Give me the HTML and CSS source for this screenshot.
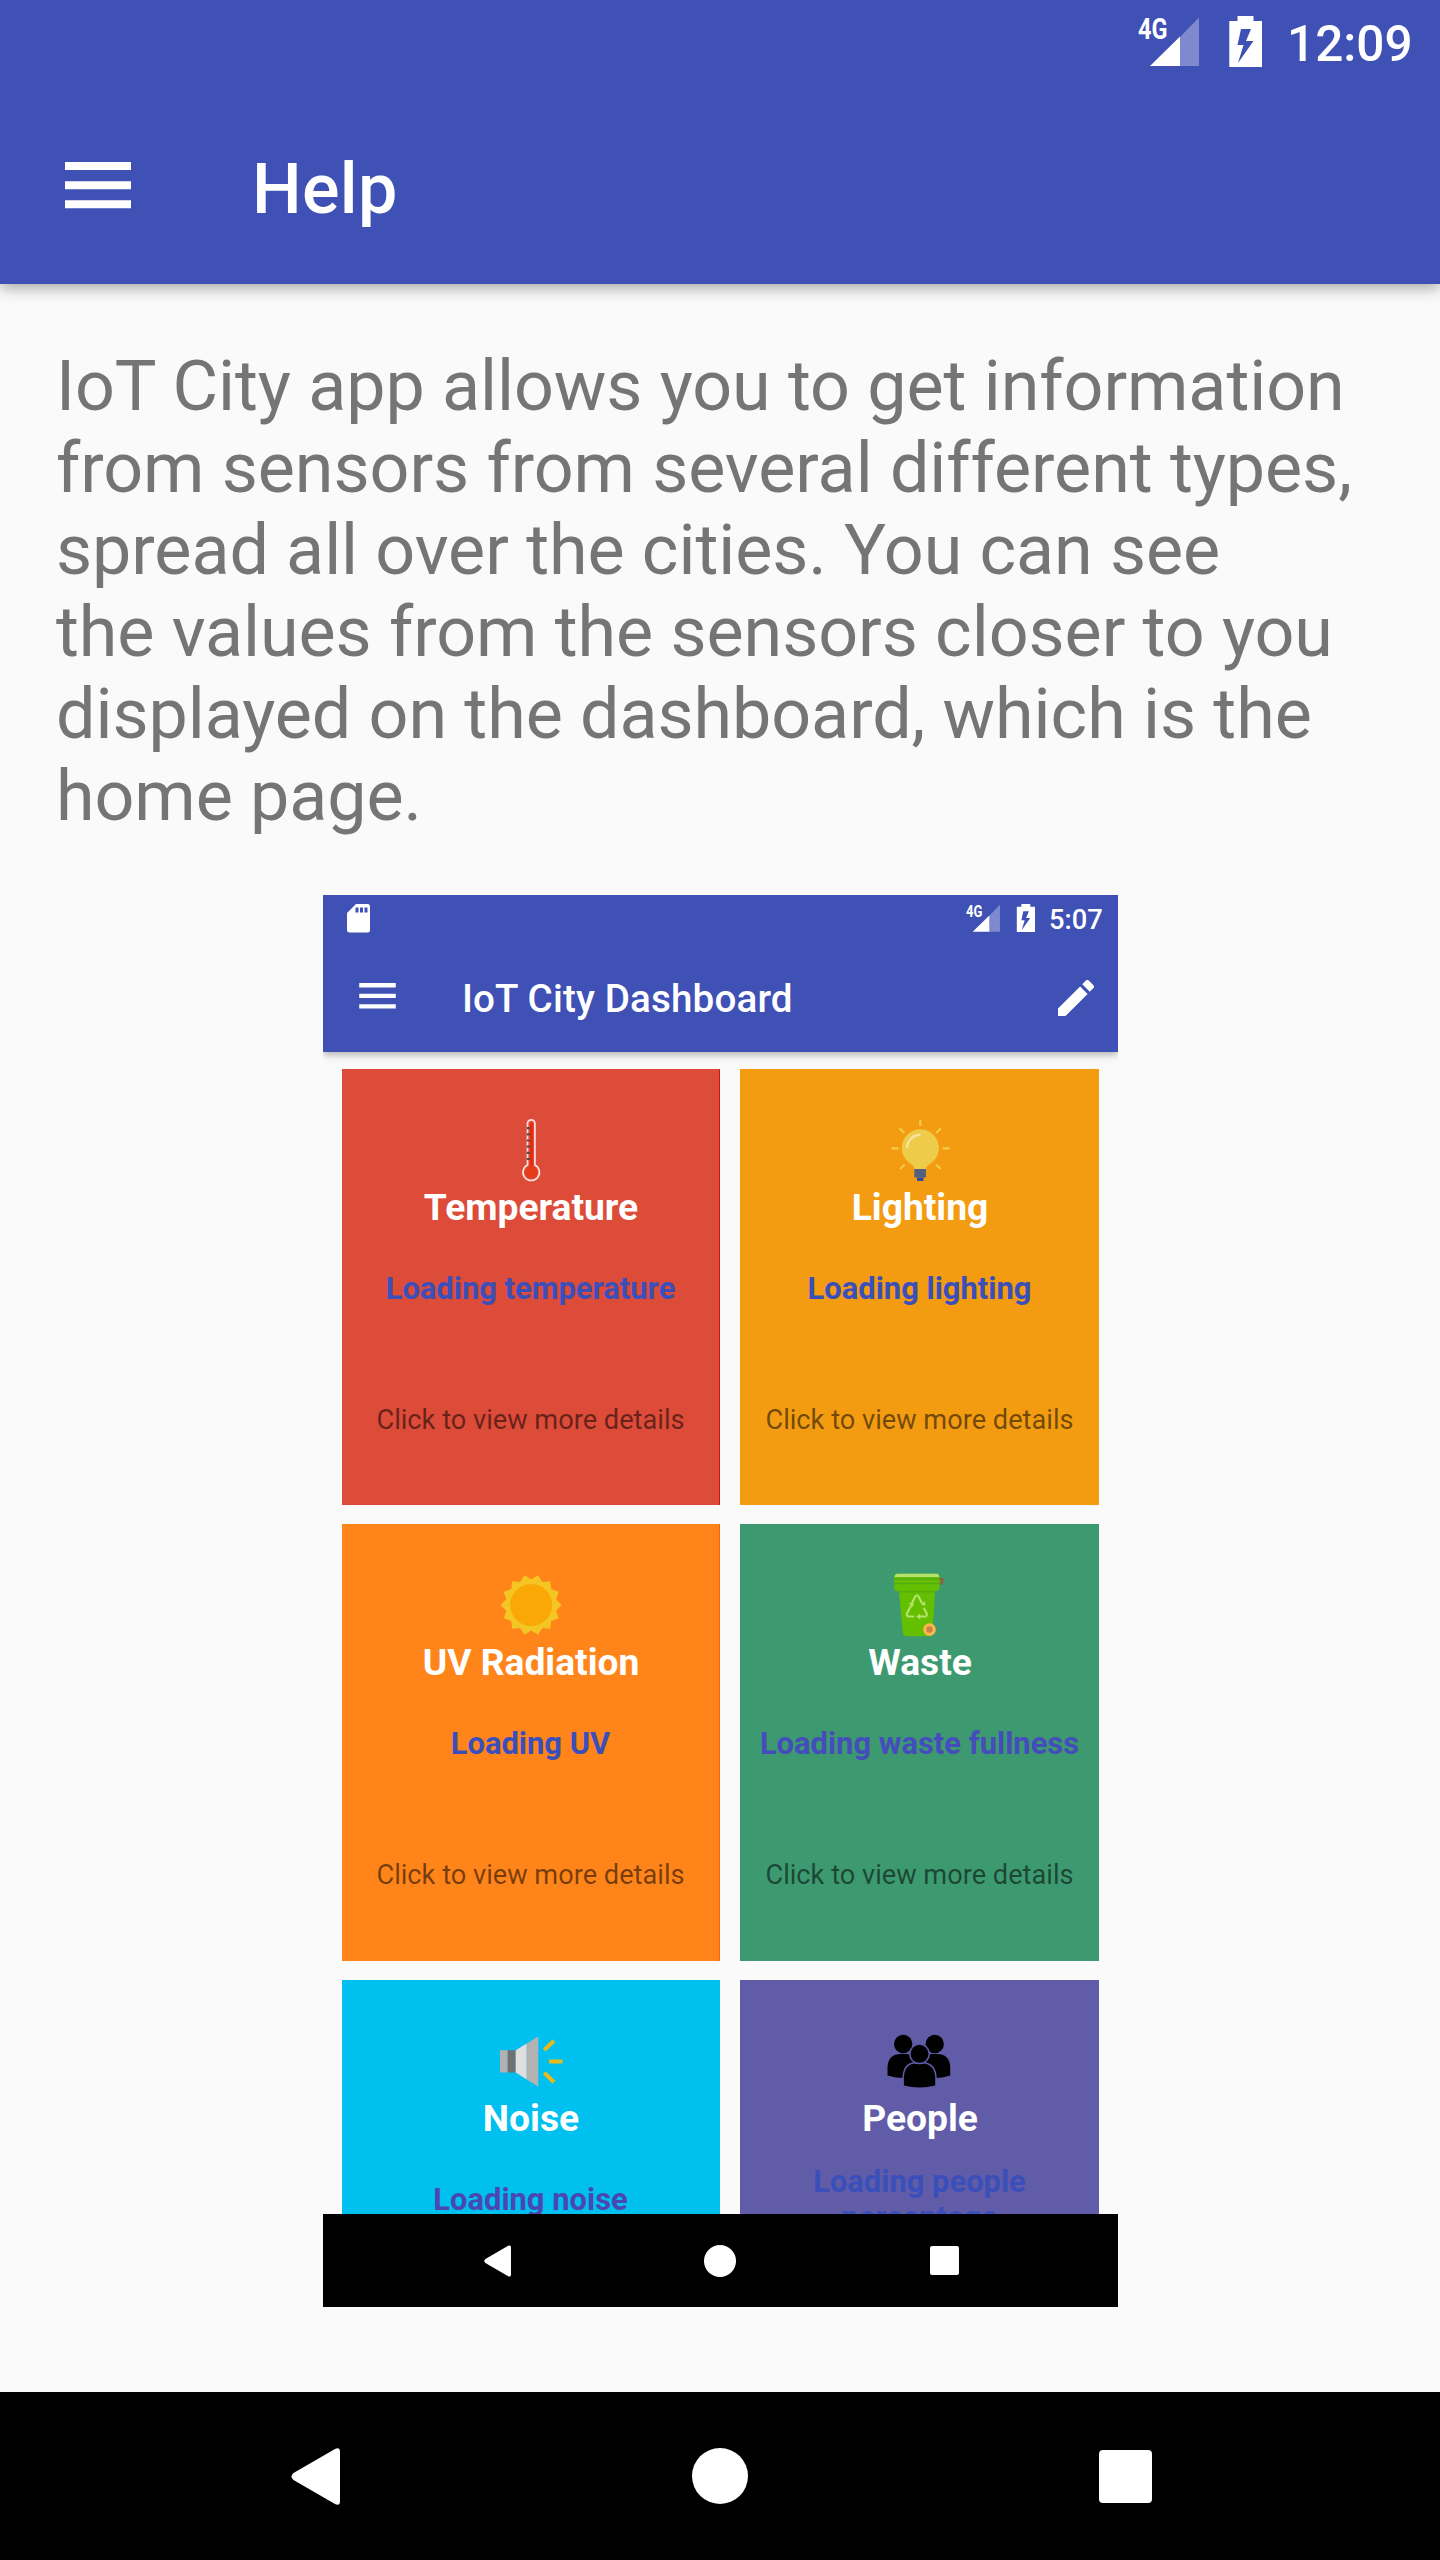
FILE: index.html
```html
<!DOCTYPE html>
<html lang="en">
<head>
<meta charset="utf-8">
<title>Help</title>
<link rel="stylesheet" href="styles.css">
</head>
<body>
<svg class="defs" aria-hidden="true">
  <symbol id="radio" viewBox="0 0 124 51">
    <text x="0" y="23" class="radio-label" textLength="29.5" lengthAdjust="spacingAndGlyphs">4G</text>
    <path d="M42 21 61 1.500V50H42z" fill="#fff" fill-opacity=".33"/>
    <path d="M12 50 42 20.500V50z" fill="#fff"/>
    <path fill="#fff" fill-rule="evenodd" d="M99.500 0h16v5H124v46H91.300V5h8.200zM103 13l-3.500 16h6l-5.500 18 15.500-22h-7.500l5-12z"/>
  </symbol>
  <symbol id="menu" viewBox="0 0 66 47">
    <path fill="#fff" d="M0 0h66v8H0zM0 19.300h66v8H0zM0 38.300h66v8H0z"/>
  </symbol>
  <symbol id="back" viewBox="0 0 49 57">
    <path fill="#fff" d="M44 1Q49-1.500 49 4V53Q49 58.500 44 56L2.500 32Q-1.500 28.500 2.500 25z"/>
  </symbol>
</svg>

<header class="app-header">
  <div class="status-bar">
    <svg class="radio"><use href="#radio"/></svg>
    <span class="clock">12:09</span>
  </div>
  <div class="toolbar">
    <svg class="menu"><use href="#menu"/></svg>
    <h1 class="title">Help</h1>
  </div>
</header>

<main class="content">
  <p class="intro">IoT City app allows you to get information<br>from sensors from several different types,<br>spread all over the cities. You can see<br>the values from the sensors closer to you<br>displayed on the dashboard, which is the<br>home page.</p>

  <section class="preview">
    <header class="preview-header">
      <div class="preview-status">
        <svg class="sd-card" viewBox="0 0 23 29"><path fill="#fff" fill-rule="evenodd" d="M9 0H20.500Q23 0 23 2.500V26Q23 28.500 20.500 28.500H2.500Q0 28.500 0 26V9zM8.500 3.500v5h3v-5zM13 3.500v5h3v-5zM17.500 3.500v5h3v-5z"/></svg>
        <svg class="preview-radio"><use href="#radio"/></svg>
        <span class="preview-clock">5:07</span>
      </div>
      <div class="preview-toolbar">
        <svg class="preview-menu"><use href="#menu"/></svg>
        <h2 class="preview-title">IoT City Dashboard</h2>
        <svg class="edit" viewBox="3 3 18 18"><path fill="#fff" d="M3 17.250V21h3.750L17.810 9.940l-3.750-3.750L3 17.250zM20.710 7.040a1 1 0 0 0 0-1.410l-2.340-2.340a1 1 0 0 0-1.410 0l-1.830 1.830 3.750 3.750 1.830-1.830z"/></svg>
      </div>
    </header>

    <div class="cards">
      <article class="card temperature">
        <svg class="icon" viewBox="0 0 64 64">
          <path d="M28.500 48V6.500a3.700 3.700 0 0 1 7.400 0V48a8.200 8.200 0 1 1-7.400 0z" fill="#dd4b39" stroke="#fbe3df" stroke-width="1.700"/>
          <path d="M32.500 6v44" stroke="#ea2a10" stroke-width="3"/>
          <circle cx="32.200" cy="55.300" r="6" fill="#e63c18"/>
          <path d="M29.500 10v33" stroke="#5a4a44" stroke-width="3.600" stroke-dasharray="2.200 4"/>
        </svg>
        <h3 class="name">Temperature</h3>
        <p class="loading">Loading temperature</p>
        <p class="more">Click to view more details</p>
      </article>
      <article class="card lighting">
        <svg class="icon" viewBox="0 0 64 64">
          <path d="M32.300 3v6M3.500 31.300h7M54.700 31.300h7M11.500 11.200l4.800 4.800M53 11.200l-4.800 4.800M12 52l4.500-4.200M52.600 52l-4.500-4.200" stroke="#f3cd45" stroke-width="2.200"/>
          <path d="M32.300 12.300a18.700 18.700 0 0 1 9 35q-3 2-3 5H26.300q0-3-3-5a18.700 18.700 0 0 1 9-35z" fill="#eecb48"/>
          <path d="M19 31a13.500 13.500 0 0 1 13.500-13.200" fill="none" stroke="#f8e3a0" stroke-width="2.400"/>
          <path d="M26.300 52H38v8.500H26.300z" fill="#556080"/>
          <path d="M29 60.500h6.500V64H29z" fill="#3349a0"/>
        </svg>
        <h3 class="name">Lighting</h3>
        <p class="loading">Loading lighting</p>
        <p class="more">Click to view more details</p>
      </article>
      <article class="card uv">
        <svg class="icon" viewBox="0 0 64 64">
          <g transform="translate(32.200 33)">
            <path fill="#f3c623" d="M30.500 0 24.900 5.700 27.500 13.200 19.900 15.900 19 23.800 11.100 23 6.800 29.700 0 25.500-6.800 29.700-11.100 23-19 23.800-19.900 15.900-27.500 13.200-24.900 5.700-30.500 0-24.900-5.700-27.500-13.200-19.900-15.900-19-23.800-11.100-23-6.800-29.700 0-25.500 6.800-29.700 11.100-23 19-23.800 19.900-15.900 27.500-13.200 24.900-5.700z"/>
            <circle r="21" fill="#f9a806"/>
          </g>
        </svg>
        <h3 class="name">UV Radiation</h3>
        <p class="loading">Loading UV</p>
        <p class="more">Click to view more details</p>
      </article>
      <article class="card waste">
        <svg class="icon" viewBox="0.800 0.500 64 64">
          <path d="M52 7.500h3q1 4-2 5" fill="none" stroke="#a8562c" stroke-width="2"/>
          <path d="M11.700 19H48l-3 45.700H20q-4 0-4.500-4z" fill="#64bf00"/>
          <rect x="7" y="2.300" width="45.200" height="17.200" rx="3.500" fill="#64bf00"/>
          <path d="M7.500 5.500Q7.500 2.300 10.500 2.300H49q3 0 3 3.200z" fill="#b3e36c"/>
          <path d="M7 7.500h45M7 12h45M12 20.300h36" stroke="#55ab10" stroke-width="1.600"/>
          <path d="M24.500 32l3.500-7q1.700-2.500 3.400 0l3.500 7M36.500 36.500l3 5.500q.7 3-2 3H31M27 45h-5.500q-2.500-.5-1.800-3l4.300-8" fill="none" stroke="#b3e36c" stroke-width="2.200"/>
          <path d="M21.500 31.500h5l-1 4zM38 29.500v5l-4-1.500zM33 42v6l-4-3z" fill="#b3e36c"/>
          <circle cx="42.300" cy="58" r="6.300" fill="#ffb74d"/>
          <circle cx="42.300" cy="58" r="3.200" fill="#c98247"/>
        </svg>
        <h3 class="name">Waste</h3>
        <p class="loading">Loading waste fullness</p>
        <p class="more">Click to view more details</p>
      </article>
      <article class="card noise">
        <svg class="icon" viewBox="0 0 64 64">
          <path d="M1 22.200h7.700v22.300H1z" fill="#b3b0b0"/>
          <path d="M8.700 22.200h8v22.300h-8z" fill="#707070"/>
          <path d="M16.700 22.200 27.700 15.500v36l-11-7z" fill="#dfdfdf"/>
          <path d="M27.700 15.500 39.300 8.500v50l-11.600-7z" fill="#b3b3b3"/>
          <path d="M45.300 22l9.700-9.200M50 33.500h13.500M45.300 44.800 55 54.300" stroke="#e8b91c" stroke-width="4"/>
        </svg>
        <h3 class="name">Noise</h3>
        <p class="loading">Loading noise</p>
        <p class="more">Click to view more details</p>
      </article>
      <article class="card people">
        <svg class="icon" viewBox="0.800 0 64 64">
          <path d="M.3 47.500V39Q1 26 14 26h5Q32 27 32 39v8.500q-15 5-31.700 0zM63 47.500V39Q62.500 26 49.500 26h-5Q32 27 32 39v8.500q15 5 31 0z"/>
          <circle cx="16" cy="16" r="9.200"/>
          <circle cx="47.500" cy="16" r="9.200"/>
          <g stroke="#615ca8" stroke-width="3" paint-order="stroke">
            <path d="M16.700 57.500V49Q17.500 35.500 29 35.500h6.500Q47 36 48 49v8.500q-15.500 4-31.300 0z"/>
            <circle cx="32.300" cy="25.800" r="9"/>
          </g>
        </svg>
        <h3 class="name">People</h3>
        <p class="loading">Loading people<br>percentage</p>
        <p class="more">Click to view more details</p>
      </article>
    </div>

    <footer class="preview-nav">
      <svg class="preview-back"><use href="#back"/></svg>
      <span class="preview-home"></span>
      <span class="preview-recent"></span>
    </footer>
  </section>
</main>

<footer class="nav-bar">
  <svg class="back"><use href="#back"/></svg>
  <span class="home"></span>
  <span class="recent"></span>
</footer>
</body>
</html>
```

FILE: styles.css
```css
* { box-sizing: border-box; }

body {
  margin: 0;
  width: 1440px;
  height: 2560px;
  display: flex;
  flex-direction: column;
  overflow: hidden;
  background: #fafafa;
  font-family: Roboto, "Liberation Sans", sans-serif;
}

h1, h2, h3, p { margin: 0; }
svg { display: block; flex: none; }
.defs { display: none; }

.app-header {
  height: 284px;
  flex: none;
  background: #3f51b5;
  color: #fff;
  box-shadow: 0 4px 14px rgba(0, 0, 0, .34);
}

.status-bar {
  height: 84px;
  display: flex;
  justify-content: flex-end;
  align-items: flex-start;
  padding: 16px 32px 0 0;
}

.radio { width: 124px; height: 51px; }
.radio-label { font: bold 29px Roboto, sans-serif; fill: #fff; }

.clock {
  width: 121px;
  margin-left: 25px;
  font-size: 49.500px;
  font-weight: 500;
  line-height: 56px;
  white-space: nowrap;
}

.toolbar {
  height: 200px;
  display: flex;
  align-items: flex-start;
  padding: 62px 0 0 65px;
}

.menu { width: 66px; height: 47px; margin-top: 16px; }

.title {
  margin-left: 121px;
  font-size: 70px;
  font-weight: 500;
  line-height: 86px;
  letter-spacing: .3px;
}

.content { flex: 1; padding-top: 61px; }

.intro {
  padding-left: 56px;
  font-size: 70px;
  line-height: 82px;
  letter-spacing: -.06px;
  color: #757575;
  white-space: nowrap;
}

.preview {
  width: 795px;
  height: 1412px;
  margin: 58px 0 0 323px;
  display: flex;
  flex-direction: column;
  overflow: hidden;
}

.preview-header {
  height: 156.500px;
  flex: none;
  background: #3f51b5;
  color: #fff;
  box-shadow: 0 2px 8px rgba(0, 0, 0, .34);
}

.preview-status {
  height: 46px;
  display: flex;
  align-items: flex-start;
  padding: 9px 0 0 23.500px;
}

.sd-card { width: 23px; height: 29px; }
.preview-radio { width: 69px; height: 28.400px; margin-left: 596.700px; }

.preview-clock {
  margin-left: 13.800px;
  font-size: 27.300px;
  font-weight: 500;
  line-height: 32px;
}

.preview-toolbar {
  height: 110px;
  display: flex;
  align-items: center;
  padding: 0 24.500px 0 36px;
}

.preview-menu { width: 37px; height: 26px; }

.preview-title {
  flex: 1;
  margin-left: 66px;
  padding-top: 6px;
  font-size: 38.600px;
  font-weight: 500;
  line-height: 46px;
  letter-spacing: .15px;
}

.edit { width: 36px; height: 36px; margin-top: 3px; }

.cards {
  flex: 1;
  min-height: 0;
  display: grid;
  grid-template-columns: 378px 359px;
  grid-auto-rows: 436.500px;
  gap: 19px 20px;
  padding: 17px 0 0 19px;
  overflow: hidden;
}

.card {
  display: flex;
  flex-direction: column;
  align-items: center;
  padding-top: 48px;
}

.card:nth-child(odd) { border-right: 1px solid transparent; }
.temperature { background: #dd4b39; }
.card.temperature { border-right-color: #d51313; }
.lighting { background: #f39c12; }
.uv { background: #ff851b; }
.card.uv { border-right-color: #ff6208; }
.waste { background: #3d9970; }
.noise { background: #00c0ef; }
.people { background: #605ca8; }

.icon { width: 64px; height: 64px; overflow: visible; }

.name {
  margin-top: 4px;
  padding-left: 1px;
  font-size: 37.200px;
  font-weight: 700;
  line-height: 44px;
  color: #fff;
}

.loading {
  height: 72px;
  margin-top: 24px;
  display: flex;
  align-items: center;
  font-size: 30.900px;
  font-weight: 700;
  line-height: 36px;
  text-align: center;
  color: #3b4fba;
}

.noise .loading { color: #4a48b0; }
.waste .loading { color: #444dbb; }

.more {
  margin-top: 78px;
  font-size: 27.200px;
  line-height: 34px;
  color: rgba(0, 0, 0, .54);
}

.preview-nav {
  height: 93px;
  flex: none;
  display: flex;
  align-items: center;
  padding-left: 161px;
  background: #000;
}

.preview-back { width: 27px; height: 32px; }
.preview-home { width: 32px; height: 32px; margin-left: 193px; border-radius: 50%; background: #fff; }
.preview-recent { width: 29px; height: 29px; margin-left: 194px; border-radius: 2px; background: #fff; }

.nav-bar {
  height: 168px;
  flex: none;
  display: flex;
  align-items: center;
  padding-left: 291px;
  background: #000;
}

.back { width: 49px; height: 57px; }
.home { width: 56px; height: 56px; margin-left: 352px; border-radius: 50%; background: #fff; }
.recent { width: 53px; height: 53px; margin-left: 351px; border-radius: 4px; background: #fff; }
```
